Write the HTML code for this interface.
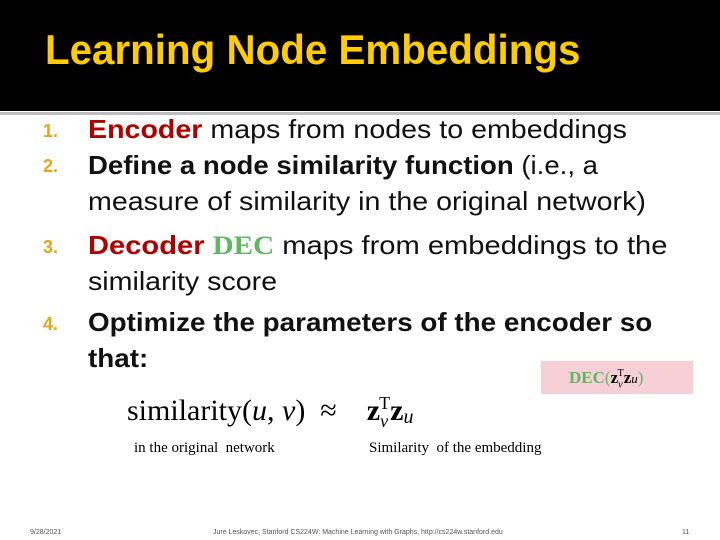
<!DOCTYPE html>
<html><head><style>
body{margin:0;width:720px;height:540px;position:relative;background:#fff;font-family:"Liberation Sans",sans-serif;overflow:hidden}
.hdr{position:absolute;left:0;top:0;width:720px;height:111px;background:#000}
.ln{position:absolute;left:0;top:112px;width:720px;height:3px;background:#bdbdbd}
.title{position:absolute;left:45px;top:26px;color:#ffcc00;font-size:42px;font-weight:bold;transform:scaleX(0.96);transform-origin:left;white-space:nowrap}
.t{position:absolute;left:88px;font-size:26px;color:#111;white-space:nowrap;transform:scaleX(1.1);transform-origin:left}
.n{position:absolute;left:43px;font-size:18px;font-weight:bold;color:#e8a317}
.red{color:#b00000;font-weight:bold}
.b{font-weight:bold}
.g{color:#5fb760;font-family:"Liberation Serif",serif;font-weight:bold}
.serif{font-family:"Liberation Serif",serif;position:absolute;white-space:nowrap}
.foot{position:absolute;top:529px;font-size:7px;color:#555}
</style></head><body>
<div class="hdr"></div><div class="ln"></div>
<div class="title">Learning Node Embeddings</div>
<div class="n" style="top:121px">1.</div>
<div class="t" style="top:114px"><span class="red">Encoder</span> maps from nodes to embeddings</div>
<div class="n" style="top:156px">2.</div>
<div class="t b" style="top:150px;transform:scaleX(1.06)">Define a node similarity function <span style="font-weight:normal">(i.e., a</span></div>
<div class="t" style="top:186px">measure of similarity in the original network)</div>
<div class="n" style="top:237px">3.</div>
<div class="t" style="top:230px;transform:scaleX(1.12)"><span class="red">Decoder</span> <span class="g">DEC</span> maps from embeddings to the</div>
<div class="t" style="top:266px">similarity score</div>
<div class="n" style="top:314px">4.</div>
<div class="t b" style="top:307px;transform:scaleX(1.07)">Optimize the parameters of the encoder so</div>
<div class="t b" style="top:343px;transform:scaleX(1.07)">that:</div>
<div style="position:absolute;left:541px;top:361px;width:152px;height:33px;background:#f6d0d6"></div>
<div class="serif" style="left:569px;top:368px;font-size:17px"><span class="g">DEC</span><span style="color:#5fb760">(</span><b>z</b><sub style="font-size:10px"><i>v</i></sub><sup style="font-size:10px;margin-left:-5px">T</sup><b>z</b><i style="font-size:13px">u</i><span style="color:#5fb760">)</span></div>
<div class="serif" style="left:127px;top:393px;font-size:30px">similarity(<i>u</i>, <i>v</i>) &nbsp;≈ &nbsp;&nbsp;&nbsp;<b>z</b><sub style="font-size:18px"><i>v</i></sub><sup style="font-size:18px;margin-left:-9px">T</sup><b>z</b><sub style="font-size:20px;vertical-align:-3px"><i>u</i></sub></div>
<div class="serif" style="left:134px;top:440px;font-size:15px">in the original &nbsp;network</div>
<div class="serif" style="left:369px;top:440px;font-size:15px">Similarity &nbsp;of the embedding</div>
<div class="foot" style="left:30px">9/28/2021</div>
<div class="foot" style="left:213px">Jure Leskovec, Stanford CS224W: Machine Learning with Graphs, http://cs224w.stanford.edu</div>
<div class="foot" style="left:682px">11</div>
</body></html>
